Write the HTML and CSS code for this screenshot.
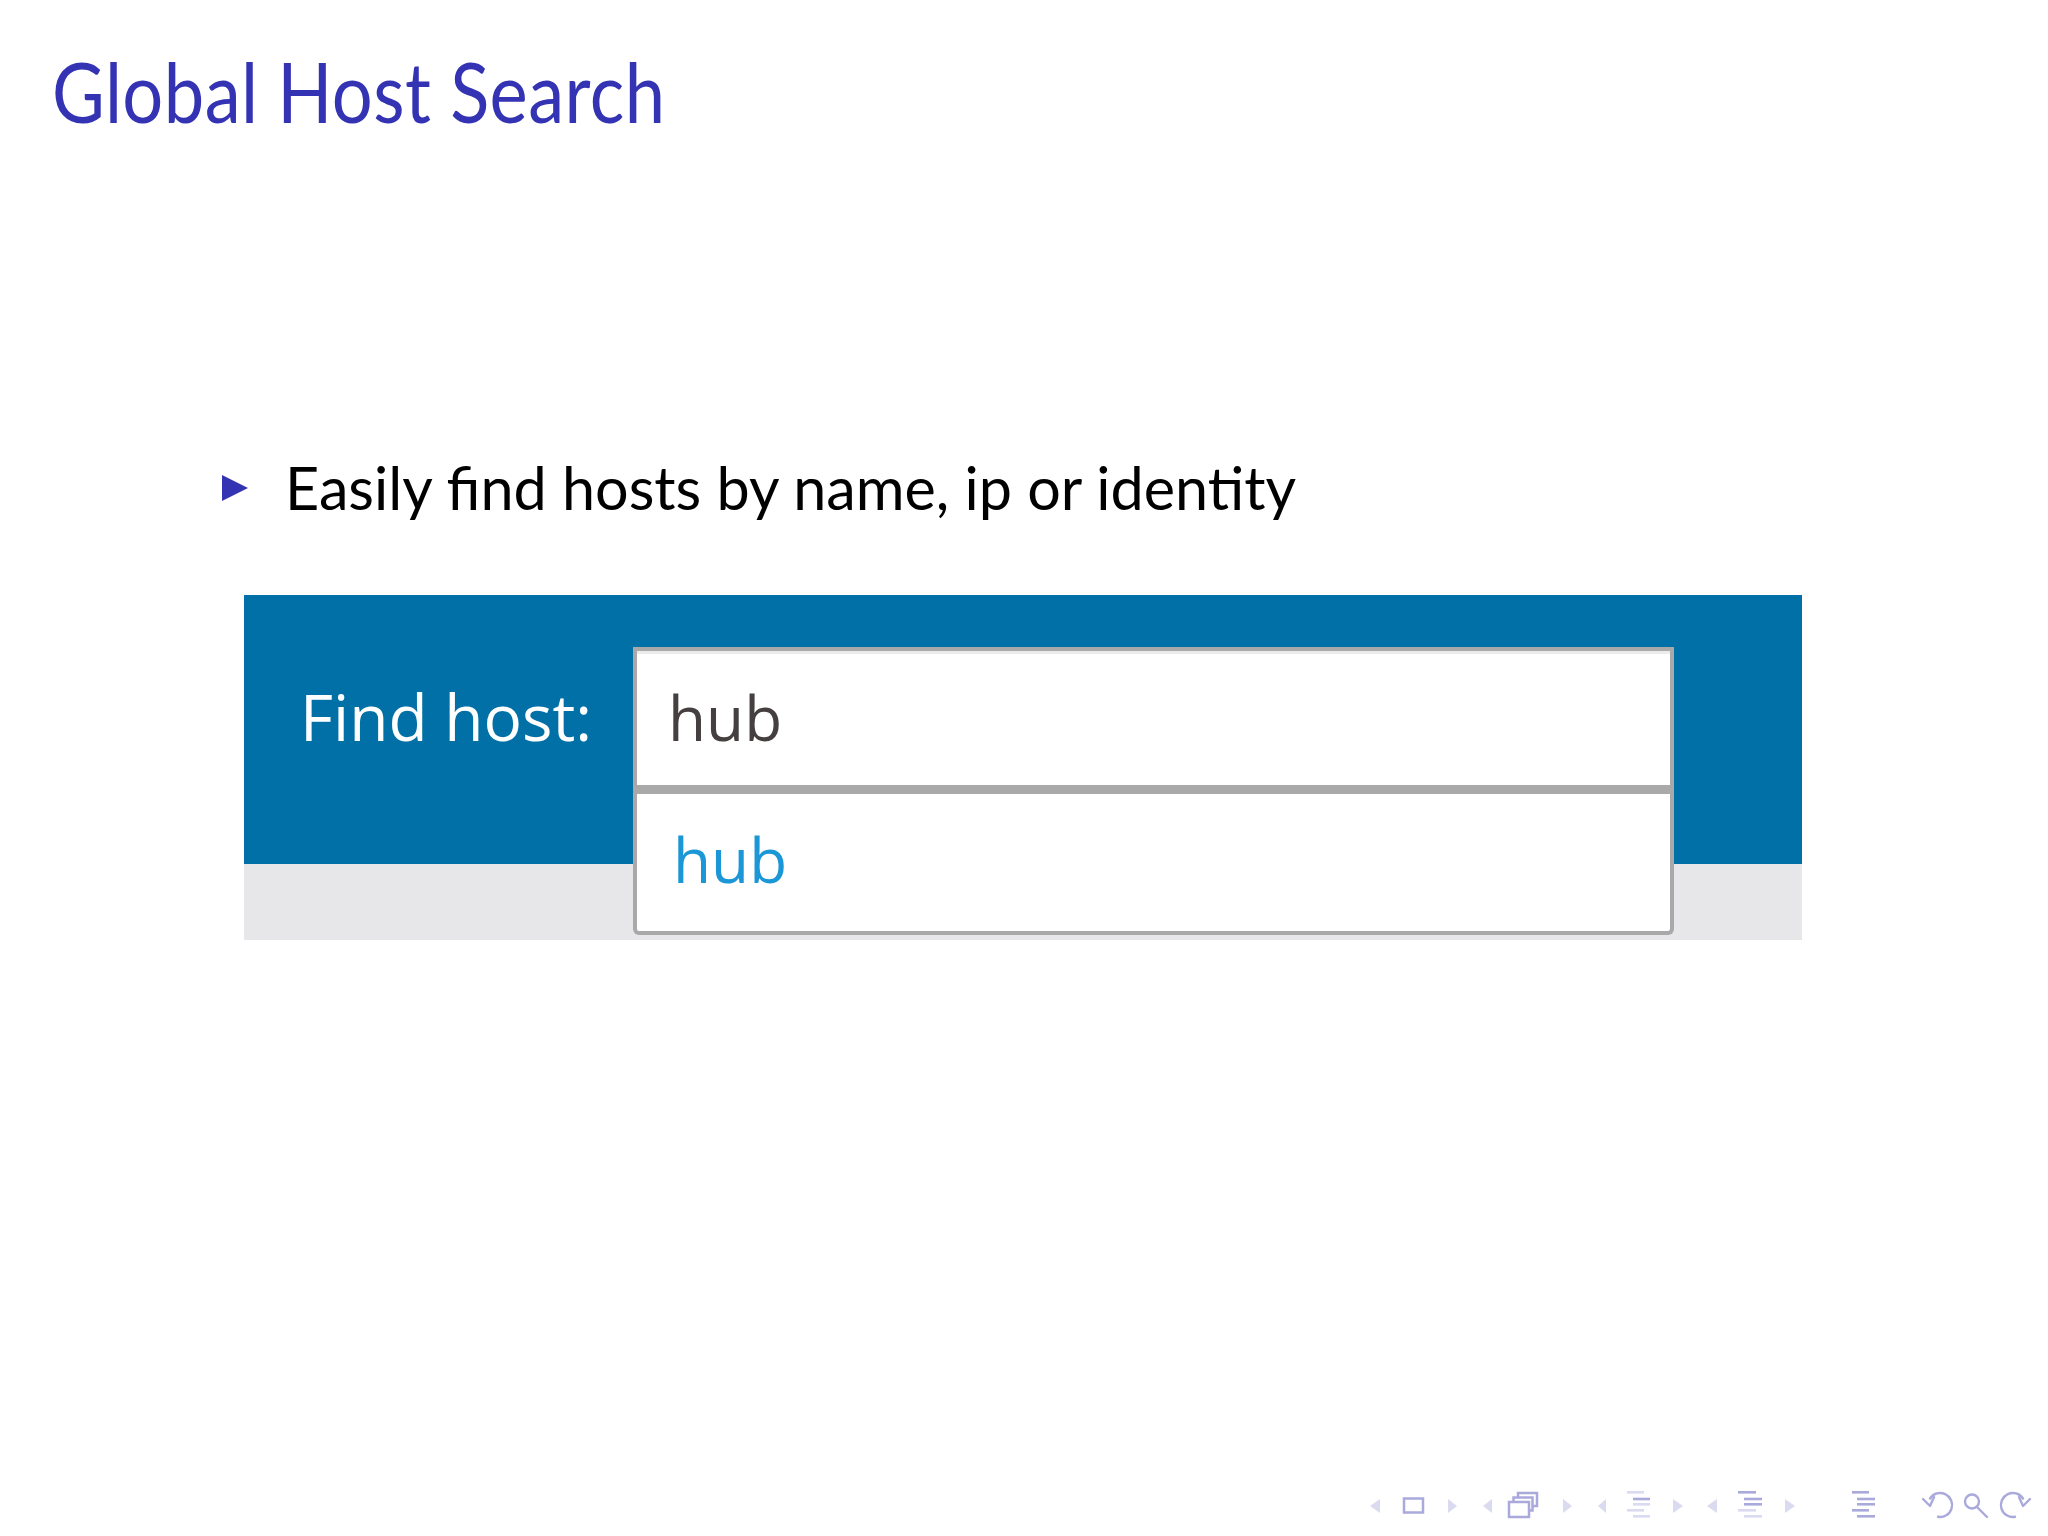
FILE: index.html
```html
<!DOCTYPE html>
<html>
<head>
<meta charset="utf-8">
<title>Global Host Search</title>
<link rel="stylesheet" href="styles.css">
</head>
<body>
<div class="slide">
  <h1 class="frametitle">Global Host Search</h1>
  <div class="frame">
    <ul class="items">
      <li class="item">
        <svg class="tri" width="26" height="26" viewBox="0 0 26 26"><polygon points="0,0 26,13 0,26" fill="#3333b3"/></svg>
        <span>Easily find hosts by name, ip or identity</span>
      </li>
    </ul>
    <div class="shot">
      <div class="bar">
        <span class="label">Find host:</span>
        <div class="combo">
          <div class="input">hub</div>
          <div class="dropdown"><div class="opt">hub</div></div>
        </div>
      </div>
      <div class="band"></div>
    </div>
  </div>
  <nav class="navsym">
    <svg width="680" height="40" viewBox="0 0 680 40">
      <g fill="#dadaf0">
        <polygon points="20,14 20,28 10,21"/>
        <polygon points="88,14 88,28 97,21"/>
        <polygon points="132,14 132,28 123,21"/>
        <polygon points="203,14 203,28 212,21"/>
        <polygon points="246,14 246,28 238,21"/>
        <polygon points="313,14 313,28 323,21"/>
        <polygon points="357,14 357,28 347,21"/>
        <polygon points="425,14 425,28 435,21"/>
      </g>
      <g fill="none" stroke="#aaa9dc" stroke-width="2.5">
        <rect x="44" y="13.5" width="19" height="14"/>
        <rect x="158" y="8" width="19" height="13" fill="#fff"/>
        <rect x="153.5" y="12.5" width="19" height="13" fill="#fff"/>
        <rect x="149" y="17" width="20" height="15" fill="#fff"/>
      </g>
      <g>
        <rect x="267" y="6" width="17" height="2.6" fill="#dadaf0"/>
        <rect x="273" y="12.7" width="17" height="2.6" fill="#aaa9dc"/>
        <rect x="273" y="18" width="17" height="2.6" fill="#dadaf0"/>
        <rect x="267" y="24" width="17" height="2.6" fill="#dadaf0"/>
        <rect x="273" y="30" width="17" height="2.6" fill="#dadaf0"/>

        <rect x="378" y="6" width="18" height="2.6" fill="#aaa9dc"/>
        <rect x="384" y="12.7" width="18" height="2.6" fill="#aaa9dc"/>
        <rect x="384" y="18" width="18" height="2.6" fill="#aaa9dc"/>
        <rect x="378" y="24" width="18" height="2.6" fill="#dadaf0"/>
        <rect x="384" y="30" width="18" height="2.6" fill="#dadaf0"/>

        <rect x="492" y="6" width="17" height="2.6" fill="#aaa9dc"/>
        <rect x="497" y="12.7" width="18" height="2.6" fill="#aaa9dc"/>
        <rect x="497" y="18" width="18" height="2.6" fill="#aaa9dc"/>
        <rect x="492" y="24" width="17" height="2.6" fill="#aaa9dc"/>
        <rect x="497" y="30" width="18" height="2.6" fill="#aaa9dc"/>
      </g>
      <g fill="none" stroke="#aaa9dc" stroke-width="2.4" stroke-linecap="round" stroke-linejoin="round">
        <path d="M570 13.5 A12 12 0 1 1 578 31.8"/>
        <path d="M563 14 L570 21 L574 12"/>
        <circle cx="612" cy="16.5" r="7"/>
        <path d="M617 22 L627 32"/>
        <path d="M663 13.5 A12 12 0 1 0 655 31.8"/>
        <path d="M670 14 L663 21 L659 12"/>
      </g>
    </svg>
  </nav>
</div>
</body>
</html>
```

FILE: styles.css
```css
html, body {
  margin: 0;
  padding: 0;
  background: #ffffff;
}

.slide {
  width: 2048px;
  height: 1536px;
  display: flex;
  flex-direction: column;
  overflow: hidden;
  font-family: "Lato", "DejaVu Sans", sans-serif;
}

.frametitle {
  margin: 0;
  padding: 43px 0 0 52px;
  font-weight: 400;
  font-size: 84px;
  line-height: 96px;
  color: #3333b3;
  letter-spacing: 0.5px;
  transform: scaleX(0.86);
  transform-origin: 52px 0;
}

.frame {
  margin-top: 312px;
  display: flex;
  flex-direction: column;
}

.items {
  list-style: none;
  margin: 0;
  padding: 0 0 0 222px;
}

.item {
  display: flex;
  align-items: center;
  font-size: 59.3px;
  line-height: 72px;
  color: #000;
}

.tri {
  flex: none;
  margin-right: 37px;
  margin-top: 2px;
}

.shot {
  margin: 72px 0 0 244px;
  width: 1558px;
  display: flex;
  flex-direction: column;
  font-family: "Open Sans", "Noto Sans", sans-serif;
}

.bar {
  height: 269px;
  box-sizing: border-box;
  background: #0070a7;
  padding: 52px 0 0 56px;
  display: flex;
  align-items: baseline;
  gap: 41px;
}

.label {
  color: #ffffff;
  font-size: 64px;
  line-height: 84px;
}

.combo {
  position: relative;
  width: 1041px;
}

.input {
  box-sizing: border-box;
  height: 147px;
  background: #fff;
  border: 4px solid #a9a9a9;
  border-bottom-width: 9px;
  box-shadow: inset 0 3px 0 #ececec;
  padding: 24px 0 0 31px;
  font-size: 62px;
  line-height: 84px;
  color: #463f40;
}

.dropdown {
  position: absolute;
  left: 0;
  top: 100%;
  width: 100%;
  height: 141px;
  box-sizing: border-box;
  background: #fff;
  border: 4px solid #a9a9a9;
  border-top: 0;
  border-radius: 0 0 6px 6px;
  padding: 23px 0 0 36px;
}

.opt {
  font-size: 62px;
  line-height: 84px;
  color: #1b96d6;
}

.band {
  height: 76px;
  background: #e7e6e9;
}

.navsym {
  margin-top: auto;
  margin-bottom: 11px;
  display: flex;
  justify-content: flex-end;
  padding-right: 8px;
}
```
